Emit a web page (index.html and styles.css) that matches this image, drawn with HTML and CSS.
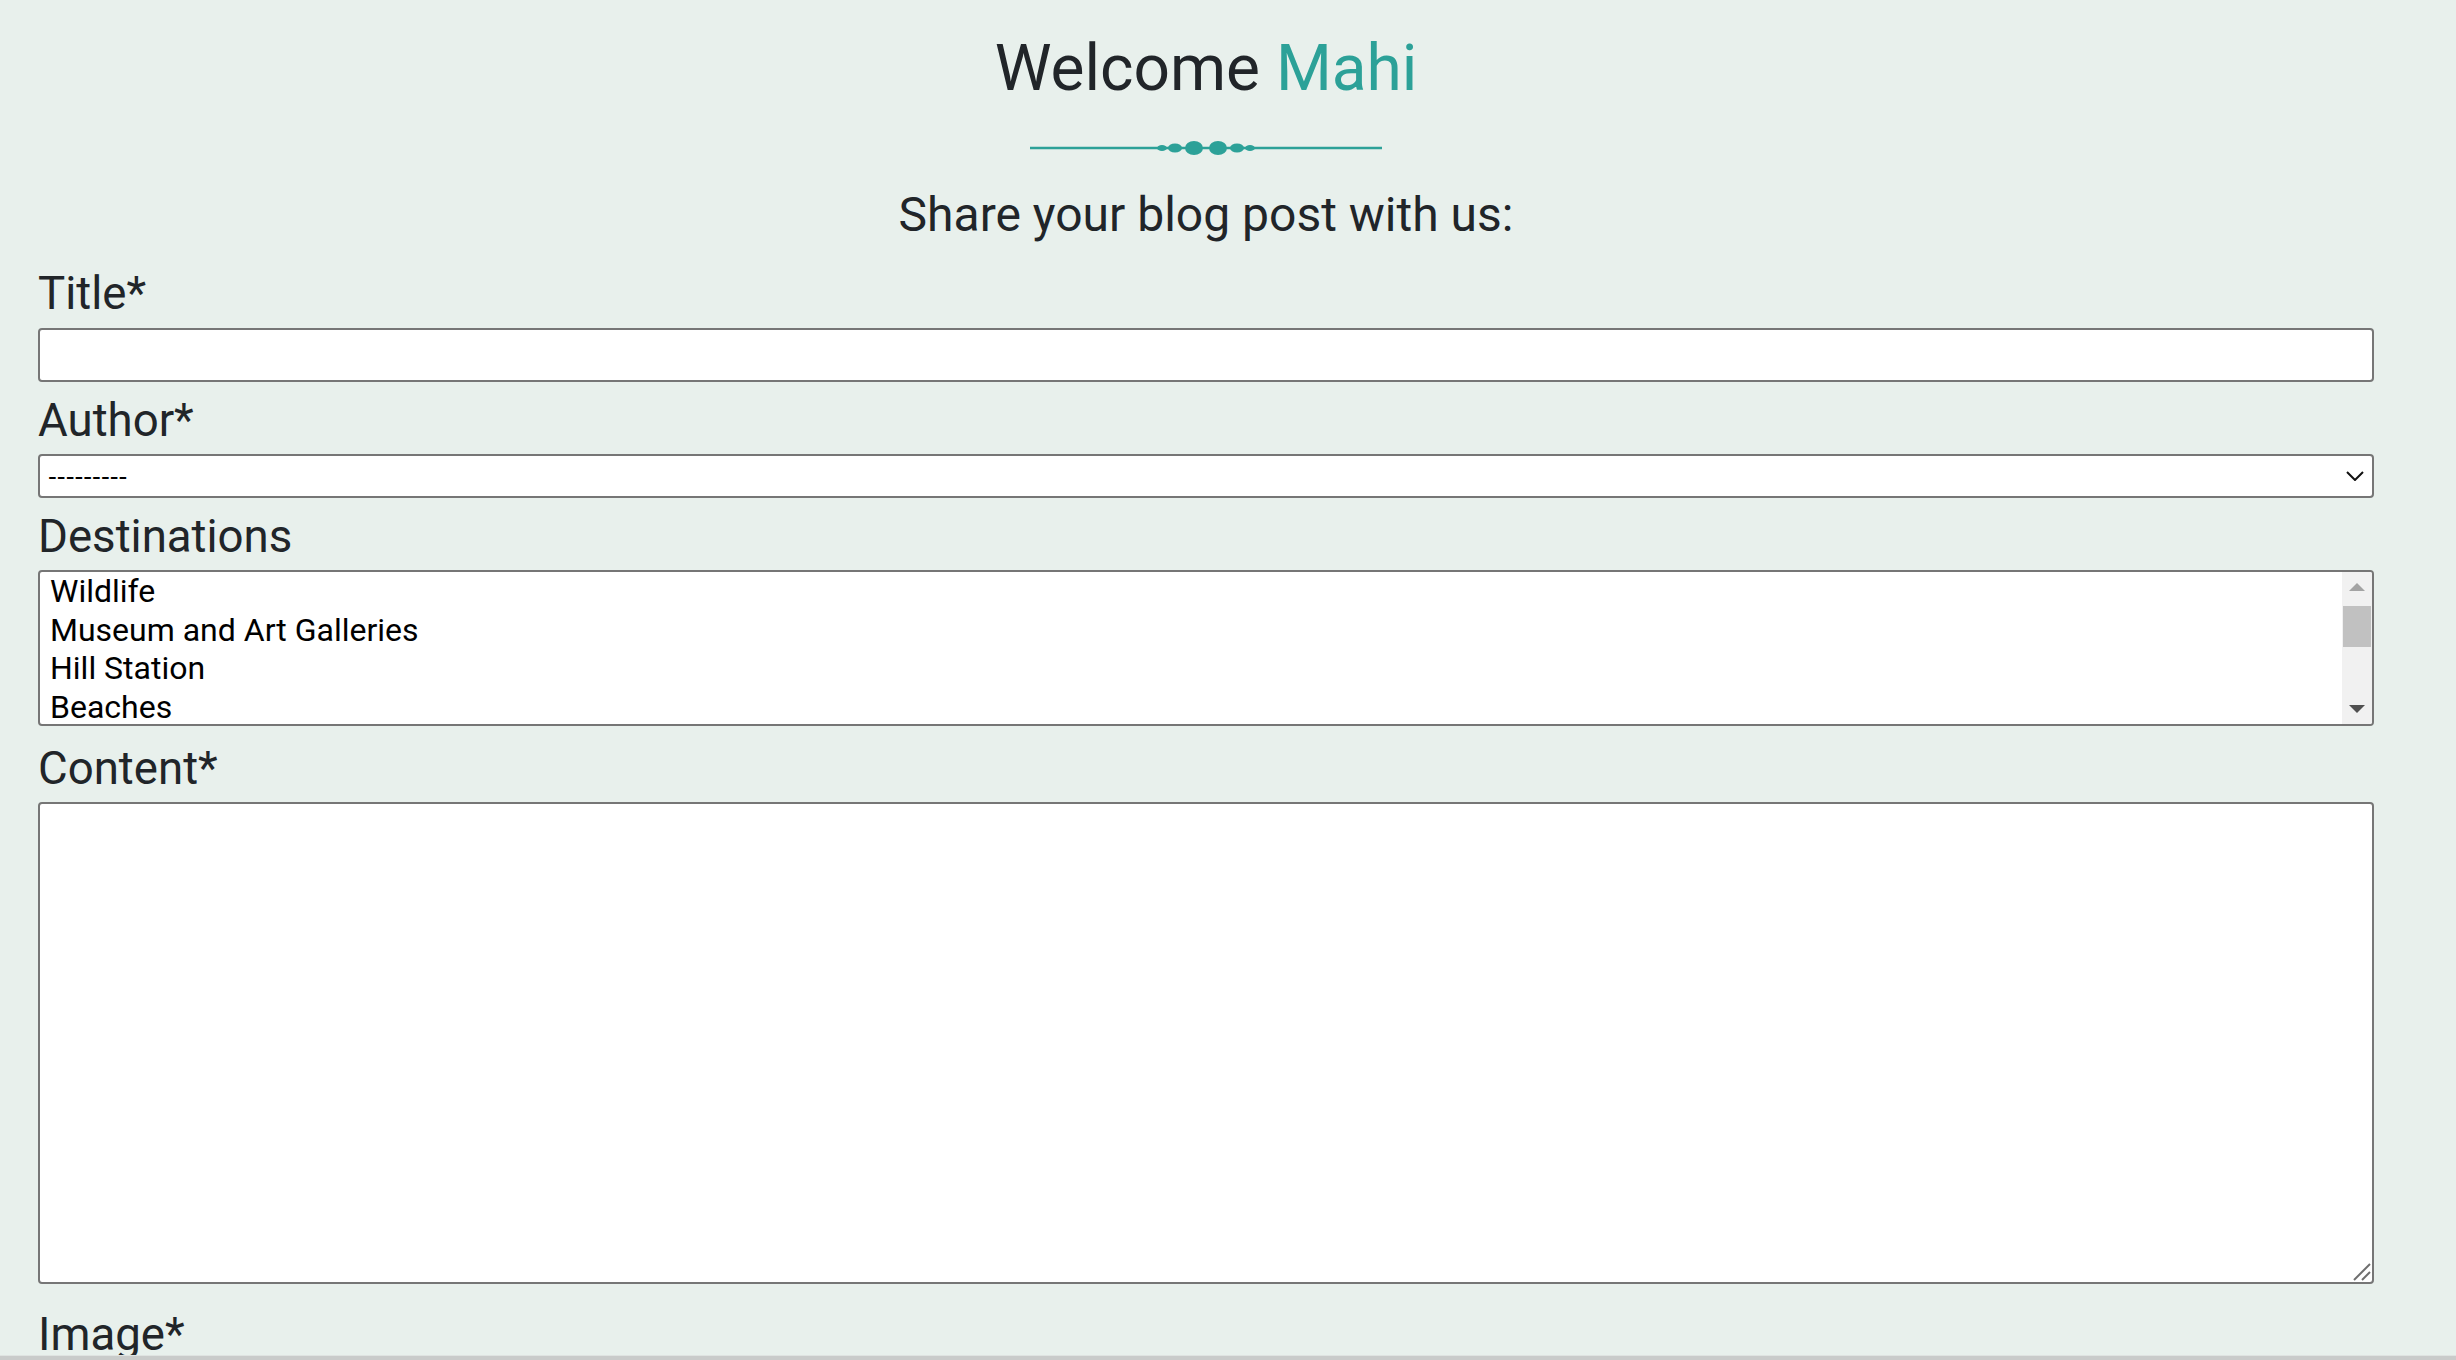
FILE: index.html
```html
<!DOCTYPE html>
<html lang="en">
<head>
<meta charset="utf-8">
<title>Add Blog Post</title>
<link rel="stylesheet" href="styles.css">
</head>
<body>
<main class="page">
  <header class="intro">
    <h1 class="welcome">Welcome <span class="accent">Mahi</span></h1>
    <svg class="divider" width="352" height="20" viewBox="0 0 352 20" aria-hidden="true">
      <line x1="0" y1="10" x2="352" y2="10" stroke="#2ca198" stroke-width="2.5"/>
      <ellipse cx="132" cy="10" rx="5" ry="3" fill="#2ca198"/>
      <ellipse cx="145" cy="10" rx="7" ry="4.5" fill="#2ca198"/>
      <ellipse cx="164" cy="10" rx="9" ry="7" fill="#2ca198"/>
      <ellipse cx="188" cy="10" rx="9" ry="7" fill="#2ca198"/>
      <ellipse cx="207" cy="10" rx="7" ry="4.5" fill="#2ca198"/>
      <ellipse cx="220" cy="10" rx="5" ry="3" fill="#2ca198"/>
    </svg>
    <h2 class="share">Share your blog post with us:</h2>
  </header>

  <form class="post-form">
    <label class="field-label" for="title">Title*</label>
    <input class="field-input" id="title" type="text">

    <label class="field-label" for="author">Author*</label>
    <div class="select-wrap">
      <select class="field-select" id="author">
        <option>---------</option>
        <option>Mahi</option>
      </select>
      <svg class="chevron" width="18" height="10" viewBox="0 0 18 10" aria-hidden="true">
        <path d="M1 1 L9 9 L17 1" fill="none" stroke="#111" stroke-width="2"/>
      </svg>
    </div>

    <label class="field-label" id="dest-label">Destinations</label>
    <div class="listbox" role="listbox" aria-multiselectable="true" aria-labelledby="dest-label">
      <div class="list-options">
        <div class="list-option" role="option">Wildlife</div>
        <div class="list-option" role="option">Museum and Art Galleries</div>
        <div class="list-option" role="option">Hill Station</div>
        <div class="list-option" role="option">Beaches</div>
      </div>
      <div class="scrollbar" aria-hidden="true">
        <div class="sb-button">
          <svg width="16" height="8" viewBox="0 0 16 8"><polygon points="0,8 8,0 16,8" fill="#a3a3a3"/></svg>
        </div>
        <div class="sb-track">
          <div class="sb-thumb"></div>
        </div>
        <div class="sb-button">
          <svg width="16" height="8" viewBox="0 0 16 8"><polygon points="0,0 16,0 8,8" fill="#505050"/></svg>
        </div>
      </div>
    </div>

    <label class="field-label label-content" for="content">Content*</label>
    <div class="text-wrap">
      <textarea class="field-text" id="content"></textarea>
      <svg class="grip" width="18" height="18" viewBox="0 0 18 18" aria-hidden="true">
        <line x1="1" y1="17" x2="17" y2="1" stroke="#6e6e6e" stroke-width="2"/>
        <line x1="9" y1="17" x2="17" y2="9" stroke="#6e6e6e" stroke-width="2"/>
      </svg>
    </div>

    <label class="field-label label-image" for="image">Image*</label>
    <input class="field-file" id="image" type="file">
  </form>
</main>
<div class="bottom-bar"></div>
</body>
</html>
```

FILE: styles.css
```css
html, body {
  margin: 0;
  padding: 0;
  overflow: hidden;
  height: 100%;
}

body {
  background: #e8f0ec;
  color: #212529;
  font-family: Roboto, "Noto Sans", "Liberation Sans", sans-serif;
  line-height: 1.5;
}

.page {
  width: 2336px;
  padding: 0 82px 0 38px;
}

.intro {
  display: flex;
  flex-direction: column;
  align-items: center;
}

.welcome {
  margin: 31px 0 0;
  font-size: 64px;
  font-weight: 400;
  line-height: 1.2;
}

.accent {
  color: #2ca198;
}

.divider {
  display: block;
  margin-top: 30px;
}

.share {
  margin: 28px 0 0;
  font-size: 48px;
  font-weight: 400;
  line-height: 1.2;
}

.post-form {
  display: flex;
  flex-direction: column;
  margin-top: 12px;
}

.field-label {
  display: block;
  font-size: 45.6px;
  line-height: 78px;
  height: 72px;
}

.field-input,
.field-select,
.listbox,
.field-text {
  box-sizing: border-box;
  width: 100%;
  margin: 0;
  border: 2px solid #767676;
  border-radius: 4px;
  background: #fff;
}

.field-input {
  height: 54px;
  margin-top: 1px;
  padding: 0 8px;
  font-size: 26px;
}

.select-wrap {
  position: relative;
}

.field-select {
  display: block;
  height: 44px;
  padding: 0 8px;
  font-family: "Liberation Sans", Arial, sans-serif;
  font-size: 26.5px;
  color: #000;
  appearance: none;
  -webkit-appearance: none;
}

.chevron {
  position: absolute;
  right: 10px;
  top: 17px;
  pointer-events: none;
}

.listbox {
  display: flex;
  height: 156px;
  overflow: hidden;
}

.list-options {
  flex: 1;
  padding: 0 0 0 10px;
  font-family: Roboto, "Noto Sans", sans-serif;
  font-size: 32px;
  line-height: 38.5px;
  color: #000;
  white-space: nowrap;
}

.scrollbar {
  width: 30px;
  display: flex;
  flex-direction: column;
  background: #f1f1f1;
}

.sb-button {
  height: 30px;
  display: flex;
  align-items: center;
  justify-content: center;
}

.sb-track {
  flex: 1;
  padding: 4px 1px 0;
}

.sb-thumb {
  height: 41px;
  background: #c1c1c1;
}

.label-content {
  margin-top: 4px;
}

.text-wrap {
  position: relative;
}

.field-text {
  display: block;
  height: 482px;
  font-size: 26px;
  resize: none;
}

.grip {
  position: absolute;
  right: 3px;
  bottom: 3px;
  pointer-events: none;
}

.label-image {
  margin-top: 12px;
}

.field-file {
  font-size: 26px;
}

.bottom-bar {
  position: fixed;
  left: 0;
  right: 0;
  bottom: 0;
  height: 4px;
  background: #c9cbca;
  border-top: 1px solid #dfe3e1;
}
```
